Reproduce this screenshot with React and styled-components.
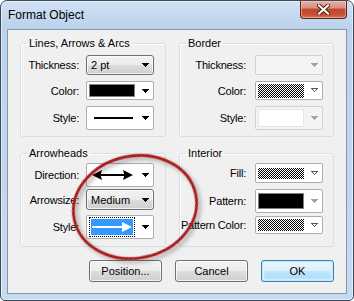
import React from 'react';
import styled, { createGlobalStyle, css } from 'styled-components';

const Global = createGlobalStyle`
  html, body { margin: 0; padding: 0; background: #fff; }
  body {
    font-family: "Liberation Sans", Arial, sans-serif;
    font-size: 11px;
    color: #000;
  }
`;

// window chrome
const Window = styled.div`
  position: relative;
  box-sizing: border-box;
  width: 354px;
  height: 301px;
  border: 1px solid #3d4a5a;
  border-radius: 7px 7px 5px 5px;
  background: linear-gradient(180deg, #cfe0f3 0%, #bcd3ec 9%, #c2d7ee 60%, #c6daf0 100%);
  box-shadow: inset 0 0 0 1px rgba(255, 255, 255, 0.55);
  padding: 0 6px 6px;
  display: flex;
  flex-direction: column;
`;

const TitleBar = styled.div`
  height: 28px;
  display: flex;
  justify-content: space-between;
  align-items: flex-start;
`;

const Title = styled.div`
  margin: 7px 0 0 1px;
  font-size: 12px;
  line-height: 15px;
  color: #000;
`;

const CloseBtn = styled.div`
  box-sizing: border-box;
  width: 47px;
  height: 18px;
  border: 1px solid #5b2519;
  border-top: none;
  border-radius: 0 0 4px 4px;
  background: linear-gradient(180deg, #e7b0a4 0%, #d9907f 40%, #c2462d 50%, #c84f35 80%, #d7745a 100%);
  box-shadow: inset 0 0 0 1px rgba(255, 220, 210, 0.45);
  display: flex;
  align-items: center;
  justify-content: center;
`;

const Client = styled.div`
  flex: 1;
  border: 1px solid #8597ad;
  background: #f0f0f0;
  padding: 6px 12px 0 12px;
`;

const Groups = styled.div`
  display: grid;
  grid-template-columns: 146px 155px;
  grid-template-rows: 101px 101px;
  column-gap: 13px;
  row-gap: 9px;
`;

const Group = styled.fieldset`
  margin: 0;
  padding: 0 ${p => p.$pr}px 0 0;
  min-width: 0;
  border: 1px solid #d5dfe5;
  border-radius: 3px;
  box-shadow: inset 1px 1px 0 #fff;
`;

const Legend = styled.legend`
  margin-left: 6px;
  padding: 0 2px;
  font-size: 11px;
  line-height: 14px;
`;

const Row = styled.div`
  display: grid;
  grid-template-columns: 1fr 68px;
  column-gap: ${p => p.$gap}px;
  align-items: center;
  height: ${p => p.$h}px;
  margin-top: ${p => p.$mt}px;
`;

const Label = styled.span`
  justify-self: end;
  white-space: nowrap;
  letter-spacing: -0.2px;
`;

const comboLook = {
  button: css`
    border: 1px solid #707070;
    border-radius: 3px;
    background: linear-gradient(180deg, #f2f2f2 0%, #ebebeb 50%, #dddddd 51%, #cfcfcf 100%);
    box-shadow: inset 0 0 0 1px rgba(255, 255, 255, 0.7);
  `,
  white: css`
    border: 1px solid #abadb3;
    border-radius: 2px;
    background: #fff;
  `,
  disabled: css`
    border: 1px solid #d2d2d2;
    border-radius: 2px;
    background: #f4f4f4;
  `,
};

const Combo = styled.div`
  box-sizing: border-box;
  height: 100%;
  display: flex;
  align-items: center;
  justify-content: space-between;
  padding: 0 4px 0 2px;
  ${p => comboLook[p.$look]}
`;

const ComboText = styled.span`
  padding-left: 2px;
  font-size: 11px;
`;

const Swatch = styled.div`
  box-sizing: border-box;
  width: 46px;
  height: ${p => p.$h}px;
  ${p => p.$kind === 'solid' && css`
    background: #000;
    border: 1px solid #808080;
  `}
  ${p => p.$kind === 'checker' && css`
    background: repeating-conic-gradient(#000 0 25%, #fff 0 50%) 0 0 / 2px 2px;
  `}
  ${p => p.$kind === 'blank' && css`
    background: #fff;
    border: 1px solid #e6e6e6;
  `}
`;

const Focus = styled.div`
  box-sizing: border-box;
  width: 46px;
  height: 20px;
  padding: 1px;
  border: 1px dotted #000;
  display: flex;
`;

const Buttons = styled.div`
  display: flex;
  justify-content: flex-end;
  gap: 13px;
  margin-top: 13px;
`;

const Button = styled.div`
  box-sizing: border-box;
  width: 73px;
  height: 22px;
  display: flex;
  align-items: center;
  justify-content: center;
  border-radius: 3px;
  font-size: 11px;
  ${p => p.$default ? css`
    border: 1px solid #3c7fb1;
    background: linear-gradient(180deg, #eaf6fd 0%, #d9f0fc 50%, #bee6fd 51%, #a7d9f5 100%);
    box-shadow: inset 0 0 0 1px #c4e8fb, inset 0 0 2px 2px #e0f3fd;
  ` : css`
    border: 1px solid #707070;
    background: linear-gradient(180deg, #f2f2f2 0%, #ebebeb 50%, #dddddd 51%, #cfcfcf 100%);
    box-shadow: inset 0 0 0 1px rgba(255, 255, 255, 0.75);
  `}
`;

const Overlay = styled.svg`
  position: absolute;
  left: 0;
  top: 0;
  width: 354px;
  height: 301px;
  pointer-events: none;
`;

const Arrow = ({ kind = 'black' }) => {
  if (kind === 'outline') {
    return (
      <svg width="7" height="5" viewBox="0 0 7 5" shapeRendering="crispEdges">
        <path d="M0 0h7v1h-1v1h-1v1h-1v1h-1v-1h-1v-1h-1v-1h-1z" fill="#555" />
        <path d="M2 1h3v1h-1v1h-1v-1h-1z" fill="#fff" />
      </svg>
    );
  }
  return (
    <svg width="7" height="4" viewBox="0 0 7 4" shapeRendering="crispEdges">
      <path d="M0 0h7v1h-1v1h-1v1h-1v1h-1v-1h-1v-1h-1v-1h-1z" fill={kind === 'gray' ? '#a3a3a3' : '#000'} />
    </svg>
  );
};

const LineSample = () => (
  <svg width="46" height="12" viewBox="0 0 46 12">
    <rect x="5" y="5" width="39" height="2" fill="#000" />
  </svg>
);

const DoubleArrow = () => (
  <svg width="46" height="14" viewBox="0 0 46 14">
    <rect x="8" y="6" width="30" height="2" fill="#000" />
    <path d="M3 7L13 2L11.5 7L13 12Z" fill="#000" />
    <path d="M44 7L34 2L35.5 7L34 12Z" fill="#000" />
  </svg>
);

const ArrowSample = () => (
  <svg width="42" height="16" viewBox="0 0 42 16">
    <rect width="42" height="16" fill="#3399ff" />
    <rect x="1" y="7" width="33" height="2" fill="#fff" />
    <path d="M31 3L41 8L31 13Z" fill="#fff" />
  </svg>
);

const Field = ({ label, h, mt, gap, children }) => (
  <Row $h={h} $mt={mt} $gap={gap}>
    <Label>{label}</Label>
    {children}
  </Row>
);

export default function App() {
  return (
    <>
      <Global />
      <Window>
        <TitleBar>
          <Title>Format Object</Title>
          <CloseBtn>
            <svg width="13" height="11" viewBox="0 0 13 11">
              <path d="M2 1.5L11 9.5M11 1.5L2 9.5" stroke="#4a2118" strokeWidth="4" strokeLinecap="square" />
              <path d="M2 1.5L11 9.5M11 1.5L2 9.5" stroke="#fff" strokeWidth="2" strokeLinecap="square" />
            </svg>
          </CloseBtn>
        </TitleBar>
        <Client>
          <Groups>
            <Group $pr={11}>
              <Legend>Lines, Arrows &amp; Arcs</Legend>
              <Field label="Thickness:" h={20} mt={5} gap={7}>
                <Combo $look="button">
                  <ComboText>2 pt</ComboText>
                  <Arrow />
                </Combo>
              </Field>
              <Field label="Color:" h={19} mt={6} gap={7}>
                <Combo $look="white">
                  <Swatch $kind="solid" $h={13} />
                  <Arrow />
                </Combo>
              </Field>
              <Field label="Style:" h={24} mt={6} gap={7}>
                <Combo $look="white">
                  <LineSample />
                  <Arrow />
                </Combo>
              </Field>
            </Group>

            <Group $pr={10}>
              <Legend>Border</Legend>
              <Field label="Thickness:" h={20} mt={5} gap={9}>
                <Combo $look="disabled">
                  <span />
                  <Arrow kind="gray" />
                </Combo>
              </Field>
              <Field label="Color:" h={19} mt={6} gap={9}>
                <Combo $look="white">
                  <Swatch $kind="checker" $h={14} />
                  <Arrow kind="outline" />
                </Combo>
              </Field>
              <Field label="Style:" h={24} mt={6} gap={9}>
                <Combo $look="disabled">
                  <Swatch $kind="blank" $h={18} />
                  <Arrow kind="gray" />
                </Combo>
              </Field>
            </Group>

            <Group $pr={11}>
              <Legend>Arrowheads</Legend>
              <Field label="Direction:" h={24} mt={3} gap={7}>
                <Combo $look="white">
                  <DoubleArrow />
                  <Arrow />
                </Combo>
              </Field>
              <Field label="Arrowsize:" h={21} mt={2} gap={7}>
                <Combo $look="button">
                  <ComboText>Medium</ComboText>
                  <Arrow />
                </Combo>
              </Field>
              <Field label="Style:" h={24} mt={5} gap={7}>
                <Combo $look="white">
                  <Focus>
                    <ArrowSample />
                  </Focus>
                  <Arrow />
                </Combo>
              </Field>
            </Group>

            <Group $pr={10}>
              <Legend>Interior</Legend>
              <Field label="Fill:" h={20} mt={3} gap={9}>
                <Combo $look="white">
                  <Swatch $kind="checker" $h={11} />
                  <Arrow kind="outline" />
                </Combo>
              </Field>
              <Field label="Pattern:" h={24} mt={6} gap={9}>
                <Combo $look="white">
                  <Swatch $kind="solid" $h={16} />
                  <Arrow kind="gray" />
                </Combo>
              </Field>
              <Field label="Pattern Color:" h={18} mt={3} gap={9}>
                <Combo $look="white">
                  <Swatch $kind="checker" $h={12} />
                  <Arrow kind="outline" />
                </Combo>
              </Field>
            </Group>
          </Groups>

          <Buttons>
            <Button>Position...</Button>
            <Button>Cancel</Button>
            <Button $default>OK</Button>
          </Buttons>
        </Client>

        <Overlay viewBox="0 0 354 301">
          <defs>
            <filter id="soft" x="-20%" y="-20%" width="140%" height="140%">
              <feDropShadow dx="2" dy="3" stdDeviation="2" floodColor="#000" floodOpacity="0.35" />
            </filter>
          </defs>
          <ellipse
            cx="134"
            cy="206"
            rx="62"
            ry="51"
            transform="rotate(-12 134 206)"
            fill="none"
            stroke="#a81c1c"
            strokeWidth="2.8"
            filter="url(#soft)"
          />
        </Overlay>
      </Window>
    </>
  );
}
